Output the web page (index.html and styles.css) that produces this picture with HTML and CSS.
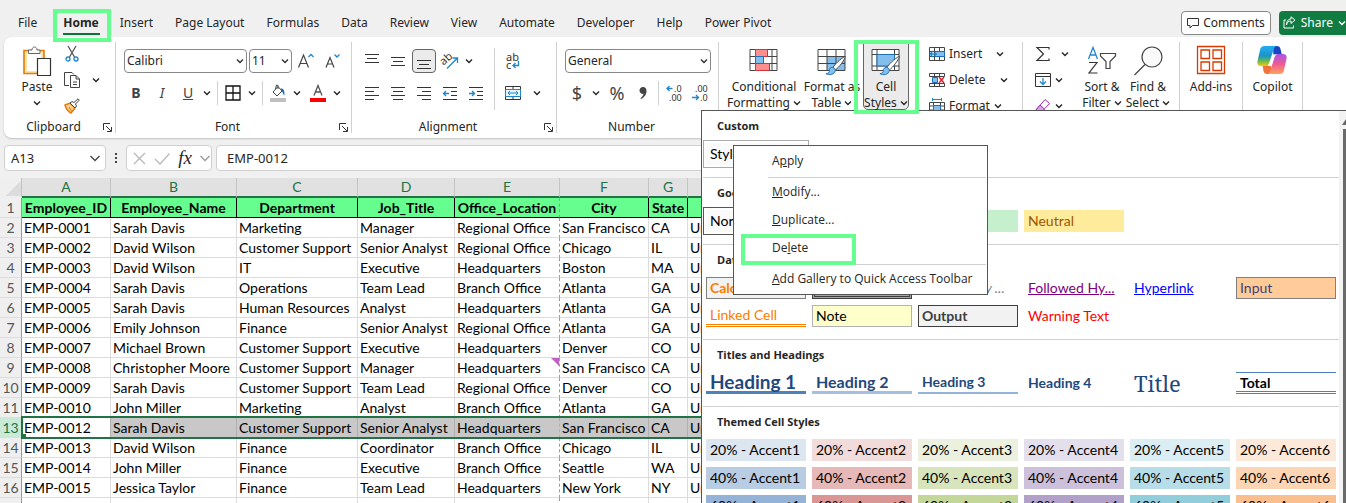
FILE: index.html
```html
<!DOCTYPE html>
<html lang="en">
<head>
    <meta charset="UTF-8">
    <meta name="viewport" content="width=device-width, initial-scale=1.0">
    <title>Employees - Excel</title>
    <link rel="stylesheet" href="styles.css">
</head>
<body>
    <svg class="defs" aria-hidden="true">
        <symbol id="chev" viewBox="0 0 8 8"><path d="M1 2.500 4 5.500 7 2.500" fill="none" stroke="currentColor" stroke-width="1.4"/></symbol>
        <symbol id="launch" viewBox="0 0 9 9"><path d="M.5 7V.5H7M3 3l5 5M8.500 4v4.500H4" fill="none" stroke="#333"/></symbol>
        <symbol id="brush" viewBox="0 0 24 22"><path d="M22 1.500C17 4 11 10 9.500 13l2.500 2.500C15.500 13 21 6 22.500 1.500z" fill="#fff" stroke="#444"/><path d="M9.500 13c-4-.5-4 3-4 4.500-.8 1.500-2 2-3.500 2 3 2 9.500 1.500 10-4z" fill="#83beec" stroke="#1e6fb8"/></symbol>
    </svg>

    <header class="tabs-bar">
        <nav class="tabs">
            <a href="#" class="tab">File</a>
            <a href="#" class="tab active">Home<span class="mark mark-home"></span></a>
            <a href="#" class="tab">Insert</a>
            <a href="#" class="tab">Page Layout</a>
            <a href="#" class="tab">Formulas</a>
            <a href="#" class="tab">Data</a>
            <a href="#" class="tab">Review</a>
            <a href="#" class="tab">View</a>
            <a href="#" class="tab">Automate</a>
            <a href="#" class="tab">Developer</a>
            <a href="#" class="tab">Help</a>
            <a href="#" class="tab">Power Pivot</a>
        </nav>
        <button class="comments"><svg width="12" height="12" viewBox="0 0 12 12"><path d="M.5 1.500h11v7H5.500L3 11V8.500H.5z" fill="none" stroke="#333"/></svg>Comments</button>
        <button class="share"><svg width="13" height="13" viewBox="0 0 13 13"><path d="M3 4H1v8h9.500V9.500M3.500 9C4 6 5.500 5 8 5V7.500L12 4 8 .8V3C5 3 3.500 5.500 3.500 9z" fill="none" stroke="#fff"/></svg>Share<svg class="chev"><use href="#chev"/></svg></button>
    </header>

    <section class="ribbon">
        <div class="group clipboard">
            <div class="content">
                <button class="big">
                    <svg width="28" height="32" viewBox="0 0 28 32"><path d="M1 5.500h20v23H1z" fill="#fbe3a4" stroke="#e07b0c" stroke-width="1.600"/><path d="M4 8h14v18H4z" fill="#fff"/><path d="M5.500 8.500V5h3.500C9 1 14 1 14 5h3v3.500z" fill="#fff" stroke="#666"/><path d="M14.500 13.500h13v17h-13z" fill="#fff" stroke="#333" stroke-width="1.200"/></svg>
                    <span>Paste</span><svg class="chev"><use href="#chev"/></svg>
                </button>
                <div class="stack">
                    <button class="tool" aria-label="Cut"><svg width="14" height="16" viewBox="0 0 14 16"><path d="M3 0l6.500 11M11 0L4.500 11" fill="none" stroke="#555" stroke-width="1.300"/><circle cx="3" cy="13" r="2" fill="none" stroke="#1e86cf" stroke-width="1.300"/><circle cx="11" cy="13" r="2" fill="none" stroke="#1e86cf" stroke-width="1.300"/></svg></button>
                    <div class="split"><button class="tool" aria-label="Copy"><svg width="16" height="16" viewBox="0 0 16 16"><path d="M5 13.500H.5V.5H8l2 2" fill="none" stroke="#444"/><path d="M6.500 3.500H12l3.500 3.500v8.500h-9zM12 3.500V7h3.500M9 10h4M9 12.500h4" fill="#fff" stroke="#444"/></svg></button><button class="drop spaced" aria-label="Copy options"><svg class="chev"><use href="#chev"/></svg></button></div>
                    <button class="tool" aria-label="Format Painter"><svg width="16" height="16" viewBox="0 0 16 16"><path d="M1 7l5-2 5 5-4 5c-2-1-5-4-6-8z" fill="#fbd08c" stroke="#e07b0c" stroke-width="1.400"/><path d="M5 9l3 5" stroke="#e07b0c"/><path d="M6 5l2-1.500 2 1L14 .8l1.300 1.300L11.500 6l1 2L11 10z" fill="#fff" stroke="#444"/></svg></button>
                </div>
            </div>
            <div class="caption">Clipboard<button class="launcher" aria-label="Clipboard settings"><svg><use href="#launch"/></svg></button></div>
        </div>

        <div class="group font">
            <div class="content rows">
                <div class="row">
                    <select class="box font-name" aria-label="Font"><option>Calibri</option></select>
                    <select class="box font-size" aria-label="Font size"><option>11</option></select>
                    <button class="tool" aria-label="Increase font size"><svg width="18" height="16" viewBox="0 0 18 16"><path d="M1.500 14.500L6.500 2l5 12.500M3 10.500h7" fill="none" stroke="#444" stroke-width="1.200"/><path d="M11.500 4L14 1.500 16.500 4" fill="none" stroke="#1e86cf" stroke-width="1.300"/></svg></button>
                    <button class="tool" aria-label="Decrease font size"><svg width="18" height="16" viewBox="0 0 18 16"><path d="M3 14.500L7 4.500l4 10M4.500 11h5" fill="none" stroke="#444" stroke-width="1.200"/><path d="M11.500 1.500L14 4 16.500 1.500" fill="none" stroke="#1e86cf" stroke-width="1.300"/></svg></button>
                </div>
                <div class="row">
                    <button class="tool letter"><b>B</b></button>
                    <button class="tool letter"><i>I</i></button>
                    <div class="split"><button class="tool letter"><u>U</u></button><button class="drop" aria-label="Underline options"><svg class="chev"><use href="#chev"/></svg></button></div>
                    <span class="line"></span>
                    <div class="split"><button class="tool" aria-label="Borders"><svg width="16" height="16" viewBox="0 0 16 16"><path d="M1 1h14v14H1zM8 1v14M1 8h14" fill="none" stroke="#111" stroke-width="1.300"/></svg></button><button class="drop" aria-label="Border options"><svg class="chev"><use href="#chev"/></svg></button></div>
                    <span class="line"></span>
                    <div class="split"><button class="tool" aria-label="Fill colour"><svg width="16" height="18" viewBox="0 0 16 18"><path d="M3 8l5-5.500L12 7l-5 5zM8 5V1.500L6.500 1 5.500 5" fill="none" stroke="#444"/><path d="M11 4.500c3 0 3.500 2 3.500 7-1.500-1-2-4-3.500-6" fill="#1e6fb8"/><path d="M0 14h16v4H0z" fill="#c0c0c0"/></svg></button><button class="drop" aria-label="Fill options"><svg class="chev"><use href="#chev"/></svg></button></div>
                    <div class="split"><button class="tool" aria-label="Font colour"><svg width="16" height="18" viewBox="0 0 16 18"><path d="M4 11.500L8 1.500l4 10M5.500 8h5" fill="none" stroke="#555" stroke-width="1.300"/><path d="M0 14h16v4H0z" fill="#f00"/></svg></button><button class="drop" aria-label="Font colour options"><svg class="chev"><use href="#chev"/></svg></button></div>
                </div>
            </div>
            <div class="caption">Font<button class="launcher" aria-label="Font settings"><svg><use href="#launch"/></svg></button></div>
        </div>

        <div class="group alignment">
            <div class="content">
                <div class="rows align-left">
                    <div class="row">
                        <button class="tool" aria-label="Top align"><svg width="14" height="16" viewBox="0 0 14 16"><path d="M0 1.500h14M2 5.500h10M0 9.500h14" stroke="#333"/></svg></button>
                        <button class="tool" aria-label="Middle align"><svg width="14" height="16" viewBox="0 0 14 16"><path d="M0 4.500h14M2 8.500h10M0 12.500h14" stroke="#333"/></svg></button>
                        <button class="tool pressed" aria-label="Bottom align"><svg width="14" height="16" viewBox="0 0 14 16"><path d="M0 7.500h14M2 11.500h10M0 15.500h14" stroke="#333"/></svg></button>
                        <div class="split"><button class="tool" aria-label="Orientation"><svg width="18" height="18" viewBox="0 0 18 18"><text x="0" y="11" font-size="11" fill="#333" transform="rotate(-42 5 9)">ab</text><path d="M6 16.500L16 6.500M11.500 6H16.500v5" fill="none" stroke="#1e86cf" stroke-width="1.300"/></svg></button><button class="drop" aria-label="Orientation options"><svg class="chev"><use href="#chev"/></svg></button></div>
                    </div>
                    <div class="row">
                        <button class="tool" aria-label="Align left"><svg width="14" height="16" viewBox="0 0 14 16"><path d="M0 2.500h14M0 6.500h9M0 10.500h14M0 14.500h9" stroke="#333"/></svg></button>
                        <button class="tool" aria-label="Center"><svg width="14" height="16" viewBox="0 0 14 16"><path d="M0 2.500h14M2 6.500h10M0 10.500h14M2 14.500h10" stroke="#333"/></svg></button>
                        <button class="tool" aria-label="Align right"><svg width="14" height="16" viewBox="0 0 14 16"><path d="M0 2.500h14M5 6.500h9M0 10.500h14M5 14.500h9" stroke="#333"/></svg></button>
                        <button class="tool" aria-label="Decrease indent"><svg width="14" height="16" viewBox="0 0 14 16"><path d="M0 2.500h14M8 6.500h6M8 10.500h6M0 14.500h14" stroke="#333"/><path d="M6 8.500H.7M3 6L.5 8.500 3 11" fill="none" stroke="#1e86cf" stroke-width="1.300"/></svg></button>
                        <button class="tool" aria-label="Increase indent"><svg width="14" height="16" viewBox="0 0 14 16"><path d="M0 2.500h14M8 6.500h6M8 10.500h6M0 14.500h14" stroke="#333"/><path d="M0 8.500h5.500M3 6l2.500 2.500L3 11" fill="none" stroke="#1e86cf" stroke-width="1.300"/></svg></button>
                    </div>
                </div>
                <span class="line tall"></span>
                <div class="rows">
                    <div class="row">
                        <button class="tool" aria-label="Wrap text"><svg width="16" height="18" viewBox="0 0 16 18"><text x="1" y="9" font-size="11" fill="#333">ab</text><text x="1" y="17" font-size="11" fill="#333">c</text><path d="M13.500 9v4.500H8M10.500 11L8 13.500l2.500 2.500" fill="none" stroke="#1e86cf" stroke-width="1.300"/></svg></button>
                    </div>
                    <div class="row split">
                        <button class="tool" aria-label="Merge and center"><svg width="16" height="16" viewBox="0 0 16 16"><path d="M.5 1.500h15v13H.5zM8 1.500V4M8 12v2.500" fill="#fff" stroke="#333"/><path d="M.5 4.500h15v7H.5z" fill="#eaf4fc" stroke="#1e86cf"/><path d="M3 8h10M5 6L3 8l2 2M11 6l2 2-2 2" fill="none" stroke="#1e86cf"/></svg></button><button class="drop spaced" aria-label="Merge options"><svg class="chev"><use href="#chev"/></svg></button>
                    </div>
                </div>
            </div>
            <div class="caption">Alignment<button class="launcher" aria-label="Alignment settings"><svg><use href="#launch"/></svg></button></div>
        </div>

        <div class="group number">
            <div class="content rows">
                <div class="row">
                    <select class="box number-format" aria-label="Number format"><option>General</option></select>
                </div>
                <div class="row">
                    <div class="split"><button class="tool symbol">$</button><button class="drop" aria-label="Currency options"><svg class="chev"><use href="#chev"/></svg></button></div>
                    <button class="tool symbol">%</button>
                    <button class="tool" aria-label="Comma style"><svg width="10" height="14" viewBox="0 0 10 14"><path d="M5 1c2.500 0 3.500 2 3.500 4 0 4-2.500 6.500-5.500 8l-.5-.8C4 11 5.300 9.500 5.500 7.800 3 8.300 1.500 6.500 1.500 4.500 1.500 2.500 3 1 5 1z" fill="#444"/></svg></button>
                    <span class="line"></span>
                    <button class="tool" aria-label="Increase decimal"><svg width="16" height="18" viewBox="0 0 16 18"><text x="8" y="8" font-size="9" fill="#333">.0</text><text x="3" y="17" font-size="9" fill="#333">.00</text><path d="M6.500 4.500H1M3.500 2L1 4.500 3.500 7" fill="none" stroke="#1e86cf" stroke-width="1.300"/></svg></button>
                    <button class="tool" aria-label="Decrease decimal"><svg width="16" height="18" viewBox="0 0 16 18"><text x="3" y="8" font-size="9" fill="#333">.00</text><text x="8" y="17" font-size="9" fill="#333">.0</text><path d="M0 13.500h6.500M4 11l2.500 2.500L4 16" fill="none" stroke="#1e86cf" stroke-width="1.300"/></svg></button>
                </div>
            </div>
            <div class="caption">Number</div>
        </div>

        <div class="group styles">
            <div class="content">
                <button class="big conditional">
                    <svg width="30" height="32" viewBox="0 0 30 32"><path d="M1 4.500h27v21H1zM1 11.500h27M1 18.500h27M6.500 4v21M23 4v21" fill="#fff" stroke="#444"/><path d="M6.500 4.500h12v7h-12zM6.500 18.500h14v7h-14z" fill="#ff8e8e" stroke="#d13438"/><path d="M6.500 11.500h8v7h-8z" fill="#83beec" stroke="#1e6fb8"/></svg>
                    <span>Conditional<br>Formatting <svg class="chev"><use href="#chev"/></svg></span>
                </button>
                <button class="big format-as">
                    <svg width="30" height="32" viewBox="0 0 30 32"><path d="M1 4.500h27v21H1z" fill="#fff"/><path d="M10 11.500h18v14H10z" fill="#83beec"/><path d="M1 4.500h27v21H1zM1 11.500h27M1 18.500h27M10 4v21M19 4v21" fill="none" stroke="#444"/><use href="#brush" x="7" y="10" width="23" height="21"/></svg>
                    <span>Format as<br>Table <svg class="chev"><use href="#chev"/></svg></span>
                </button>
                <button class="big cell-styles">
                    <svg width="30" height="32" viewBox="0 0 30 32"><path d="M1 4.500h27v21H1zM1 9.500h27M1 21h27M6 4v21M23.500 4v21" fill="#fff" stroke="#444"/><path d="M6 9.500h17.500V21H6z" fill="#83beec" stroke="#1e6fb8"/><use href="#brush" x="7" y="10" width="23" height="21"/></svg>
                    <span>Cell<br>Styles <svg class="chev"><use href="#chev"/></svg></span>
                    <span class="mark mark-styles"></span>
                </button>
                <div class="stack cells">
                    <button class="wide"><svg width="16" height="16" viewBox="0 0 16 16"><path d="M.5 1.500h15v13H.5zM5.500 1.500v13M10.500 1.500v13M.5 5.500h15M.5 10.500h15" fill="#fff" stroke="#444"/><path d="M6 5.500h9.500v5H6z" fill="#83beec" stroke="#1e6fb8"/><path d="M8 8H1M4 5L1 8l3 3" fill="none" stroke="#1e86cf" stroke-width="1.300"/></svg>Insert<svg class="chev"><use href="#chev"/></svg></button>
                    <button class="wide"><svg width="16" height="16" viewBox="0 0 16 16"><path d="M.5 1.500h15M.5 14.500h15M.5 1.500v3h15v-3M.5 14.500v-3h15v3M5.500 1.500v3M10.500 1.500v3M5.500 11.500v3M10.500 11.500v3" fill="none" stroke="#444"/><path d="M3.500 5.500h5v5h-5z" fill="#83beec" stroke="#1e6fb8"/><path d="M10 5l5 6M15 5l-5 6" stroke="#e81123" stroke-width="1.300"/></svg>Delete<svg class="chev"><use href="#chev"/></svg></button>
                    <button class="wide"><svg width="16" height="16" viewBox="0 0 16 16"><path d="M.5 4.500h15v11H.5zM4.500 4.500v11M11.500 4.500v11M.5 8h15M.5 12h15" fill="#fff" stroke="#444"/><path d="M4.500 7.500h7v5h-7z" fill="#83beec" stroke="#1e6fb8"/><path d="M3.500 0v3M12.500 0v3M3.500 1.500h9" stroke="#1e86cf"/></svg>Format<svg class="chev"><use href="#chev"/></svg></button>
                </div>
            </div>
        </div>

        <div class="group editing">
            <div class="content">
                <div class="stack">
                    <button class="wide sum" aria-label="AutoSum"><svg width="16" height="16" viewBox="0 0 16 16"><path d="M14 3.500V1.500H2L8.500 8 2 14.500h12v-2" fill="none" stroke="#333" stroke-width="1.200"/></svg><svg class="chev"><use href="#chev"/></svg></button>
                    <button class="wide" aria-label="Fill"><svg width="16" height="16" viewBox="0 0 16 16"><path d="M.5 1.500h15v13H.5zM.5 4.500h15" fill="none" stroke="#333"/><path d="M8 6v6.500M5 9.500l3 3 3-3" fill="none" stroke="#1e86cf" stroke-width="1.300"/></svg><svg class="chev"><use href="#chev"/></svg></button>
                    <button class="wide" aria-label="Clear"><svg width="16" height="16" viewBox="0 0 16 16"><path d="M10 1.500l4.500 4L6 14.500H3.500L1 12z" fill="#fff" stroke="#9b2fae"/><path d="M5 7l4.500 4L6 14.500H3.500L1 12z" fill="#d9a1e2" stroke="#9b2fae"/></svg><svg class="chev"><use href="#chev"/></svg></button>
                </div>
                <button class="big sort">
                    <svg width="30" height="32" viewBox="0 0 30 32"><path d="M1.500 14L6 2.500 10.500 14M3 10h6" fill="none" stroke="#1e86cf" stroke-width="1.300"/><path d="M2 17.500h8L2 28h8.500" fill="none" stroke="#333" stroke-width="1.200"/><path d="M13.500 8.500h15v2.500L23 16.500v7h-4v-7L13.500 11z" fill="#fff" stroke="#444" stroke-width="1.200"/></svg>
                    <span>Sort &amp;<br>Filter <svg class="chev"><use href="#chev"/></svg></span>
                </button>
                <button class="big find">
                    <svg width="30" height="32" viewBox="0 0 30 32"><circle cx="19" cy="12" r="10" fill="#fafafa" stroke="#444" stroke-width="1.200"/><path d="M12 19.500L1.500 30" stroke="#444" stroke-width="1.300"/></svg>
                    <span>Find &amp;<br>Select <svg class="chev"><use href="#chev"/></svg></span>
                </button>
            </div>
        </div>

        <div class="group addins">
            <div class="content">
                <button class="big">
                    <svg width="30" height="32" viewBox="0 0 30 32"><path d="M1.500 1.500h27v27h-27zM5 5h8.500v8.500H5zM17 5h8.500v8.500H17zM5 17h8.500v8.500H5zM17 17h8.500v8.500H17z" fill="none" stroke="#d83b01" stroke-width="1.300"/></svg>
                    <span>Add-ins</span>
                </button>
            </div>
        </div>

        <div class="group copilot">
            <div class="content">
                <button class="big">
                    <svg width="32" height="32" viewBox="0 0 32 32">
                        <defs>
                            <linearGradient id="g1" x1="0" y1="0" x2="0" y2="1"><stop offset="0" stop-color="#22aef5"/><stop offset=".5" stop-color="#1c93c8"/><stop offset=".75" stop-color="#6bbb4c"/><stop offset="1" stop-color="#f2c811"/></linearGradient>
                            <linearGradient id="g2" x1="0" y1="0" x2="0" y2="1"><stop offset="0" stop-color="#a855e8"/><stop offset=".5" stop-color="#ee5a93"/><stop offset="1" stop-color="#fda35a"/></linearGradient>
                        </defs>
                        <path d="M17 1h4c2 0 3 1 3.500 3l1.200 5H21c-2 0-3 1-3.500 3z" fill="#1747c4"/>
                        <path d="M15 29h-4c-2 0-3-1-3.500-3L6.500 20h5c2 0 3-1 3.500-3z" fill="#f0743a"/>
                        <path d="M8.500 1H21c-2 0-3 2-3.500 4l-4 12c-1 3-2 4-4 4H5c-3 0-4-2-3.500-5L4 5c.7-3 2-4 4.500-4z" fill="url(#g1)"/>
                        <path d="M23.500 29H11c2 0 3-2 3.500-4l4-13c1-3 2-3 4-3H27c3 0 4 2 3.500 5L28 25c-.7 3-2 4-4.500 4z" fill="url(#g2)"/>
                        <path d="M16.500 9.500h4.200c-1.200.5-2 1.500-2.500 3l-2.800 8.500h-4c1.200-.8 1.900-2 2.400-3.500z" fill="#fff"/>
                    </svg>
                    <span>Copilot</span>
                </button>
            </div>
        </div>
    </section>

    <section class="formula-bar">
        <div class="name-box"><input type="text" value="A13" aria-label="Name box"><svg width="10" height="8" viewBox="0 0 10 8"><path d="M.5 2L5 6.500 9.500 2" fill="none" stroke="#444" stroke-width="1.300"/></svg></div>
        <svg width="4" height="12" viewBox="0 0 4 12"><path d="M1 1h2v2H1zM1 5h2v2H1zM1 9h2v2H1z" fill="#444"/></svg>
        <div class="fx-box">
            <button aria-label="Cancel"><svg width="13" height="13" viewBox="0 0 13 13"><path d="M1 1l11 11M12 1L1 12" stroke="#b8b8b8" stroke-width="1.300"/></svg></button>
            <button aria-label="Enter"><svg width="16" height="13" viewBox="0 0 16 13"><path d="M1 7l5 5L15.500 1.500" fill="none" stroke="#b8b8b8" stroke-width="1.300"/></svg></button>
            <button class="fx">fx</button>
            <button aria-label="Functions"><svg width="10" height="8" viewBox="0 0 10 8"><path d="M.5 2L5 6.500 9.500 2" fill="none" stroke="#999" stroke-width="1.300"/></svg></button>
        </div>
        <input type="text" class="formula" value="EMP-0012" aria-label="Formula">
    </section>

    <table class="sheet">
        <colgroup><col class="c-num"><col class="c-a"><col class="c-b"><col class="c-c"><col class="c-d"><col class="c-e"><col class="c-f"><col class="c-g"><col></colgroup>
        <thead>
            <tr><th class="corner"></th><th>A</th><th>B</th><th>C</th><th>D</th><th>E</th><th>F</th><th>G</th><th></th></tr>
        </thead>
        <tbody>
            <tr class="titles"><th>1</th><td>Employee_ID</td><td>Employee_Name</td><td>Department</td><td>Job_Title</td><td>Office_Location</td><td>City</td><td>State</td><td></td></tr>
            <tr><th>2</th><td>EMP-0001</td><td>Sarah Davis</td><td>Marketing</td><td>Manager</td><td>Regional Office</td><td>San Francisco</td><td>CA</td><td>United States</td></tr>
            <tr><th>3</th><td>EMP-0002</td><td>David Wilson</td><td>Customer Support</td><td>Senior Analyst</td><td>Regional Office</td><td>Chicago</td><td>IL</td><td>United States</td></tr>
            <tr><th>4</th><td>EMP-0003</td><td>David Wilson</td><td>IT</td><td>Executive</td><td>Headquarters</td><td>Boston</td><td>MA</td><td>United States</td></tr>
            <tr><th>5</th><td>EMP-0004</td><td>Sarah Davis</td><td>Operations</td><td>Team Lead</td><td>Branch Office</td><td>Atlanta</td><td>GA</td><td>United States</td></tr>
            <tr><th>6</th><td>EMP-0005</td><td>Sarah Davis</td><td>Human Resources</td><td>Analyst</td><td>Headquarters</td><td>Atlanta</td><td>GA</td><td>United States</td></tr>
            <tr><th>7</th><td>EMP-0006</td><td>Emily Johnson</td><td>Finance</td><td>Senior Analyst</td><td>Regional Office</td><td>Atlanta</td><td>GA</td><td>United States</td></tr>
            <tr><th>8</th><td>EMP-0007</td><td>Michael Brown</td><td>Customer Support</td><td>Executive</td><td>Headquarters</td><td>Denver</td><td>CO</td><td>United States</td></tr>
            <tr><th>9</th><td>EMP-0008</td><td>Christopher Moore</td><td>Customer Support</td><td>Manager</td><td class="noted">Headquarters</td><td>San Francisco</td><td>CA</td><td>United States</td></tr>
            <tr><th>10</th><td>EMP-0009</td><td>Sarah Davis</td><td>Customer Support</td><td>Team Lead</td><td>Regional Office</td><td>Denver</td><td>CO</td><td>United States</td></tr>
            <tr><th>11</th><td>EMP-0010</td><td>John Miller</td><td>Marketing</td><td>Analyst</td><td>Branch Office</td><td>Atlanta</td><td>GA</td><td>United States</td></tr>
            <tr class="selected"><th>13</th><td>EMP-0012</td><td>Sarah Davis</td><td>Customer Support</td><td>Senior Analyst</td><td>Headquarters</td><td>San Francisco</td><td>CA</td><td>United States</td></tr>
            <tr><th>14</th><td>EMP-0013</td><td>David Wilson</td><td>Finance</td><td>Coordinator</td><td>Branch Office</td><td>Chicago</td><td>IL</td><td>United States</td></tr>
            <tr><th>15</th><td>EMP-0014</td><td>John Miller</td><td>Finance</td><td>Executive</td><td>Branch Office</td><td>Seattle</td><td>WA</td><td>United States</td></tr>
            <tr><th>16</th><td>EMP-0015</td><td>Jessica Taylor</td><td>Finance</td><td>Team Lead</td><td>Headquarters</td><td>New York</td><td>NY</td><td>United States</td></tr>
            <tr><th></th><td></td><td></td><td></td><td></td><td></td><td></td><td></td><td></td></tr>
        </tbody>
    </table>

    <!-- Cell Styles gallery -->
    <aside class="gallery">
        <div class="gallery-list">
            <section>
                <h2>Custom</h2>
                <div class="swatches"><button class="current soft">Style 1</button></div>
            </section>
            <section>
                <h2>Good, Bad and Neutral</h2>
                <div class="swatches">
                    <button class="current">Normal</button><button class="bad">Bad</button><button class="good">Good</button><button class="neutral">Neutral</button>
                </div>
            </section>
            <section>
                <h2>Data and Model</h2>
                <div class="swatches">
                    <button class="calculation">Calculation</button><button class="check">Check Cell</button><button class="explain">Explanatory ...</button><button class="followed">Followed Hy...</button><button class="hyper">Hyperlink</button><button class="input-cell">Input</button>
                    <button class="linked">Linked Cell</button><button class="note">Note</button><button class="output">Output</button><button class="warning">Warning Text</button>
                </div>
            </section>
            <section>
                <h2>Titles and Headings</h2>
                <div class="swatches">
                    <button class="h-1">Heading 1</button><button class="h-2">Heading 2</button><button class="h-3">Heading 3</button><button class="h-4">Heading 4</button><button class="title">Title</button><button class="total">Total</button>
                </div>
            </section>
            <section>
                <h2>Themed Cell Styles</h2>
                <div class="swatches">
                    <button class="a1-20">20% - Accent1</button><button class="a2-20">20% - Accent2</button><button class="a3-20">20% - Accent3</button><button class="a4-20">20% - Accent4</button><button class="a5-20">20% - Accent5</button><button class="a6-20">20% - Accent6</button>
                    <button class="a1-40">40% - Accent1</button><button class="a2-40">40% - Accent2</button><button class="a3-40">40% - Accent3</button><button class="a4-40">40% - Accent4</button><button class="a5-40">40% - Accent5</button><button class="a6-40">40% - Accent6</button>
                    <button class="a1-60">60% - Accent1</button><button class="a2-60">60% - Accent2</button><button class="a3-60">60% - Accent3</button><button class="a4-60">60% - Accent4</button><button class="a5-60">60% - Accent5</button><button class="a6-60">60% - Accent6</button>
                </div>
            </section>
        </div>
        <div class="scrollbar"><svg width="7" height="6" viewBox="0 0 7 6"><path d="M3 6l4-6v6z" fill="#666"/></svg><span class="thumb"></span></div>
    </aside>

    <menu class="context-menu">
        <li><button>A<u>p</u>ply</button></li>
        <li class="divided"><button><u>M</u>odify...</button></li>
        <li><button><u>D</u>uplicate...</button></li>
        <li><button>De<u>l</u>ete</button><span class="mark mark-delete"></span></li>
        <li class="divided"><button><u>A</u>dd Gallery to Quick Access Toolbar</button></li>
    </menu>
</body>
</html>
```
FILE: styles.css
```css
*, *::before, *::after {
    box-sizing: border-box;
    margin: 0;
    padding: 0;
}
body {
    position: relative;
    height: 100vh;
    overflow: hidden;
    background: #f0f0f0;
    color: #262626;
    font-family: "Noto Sans", "Open Sans", sans-serif;
    font-size: 12px;
    line-height: 16px;
}
button, input, select {
    font: inherit;
    color: inherit;
    border: none;
    background: none;
}
svg {
    display: block;
    flex: none;
    overflow: visible;
}
.defs {
    display: none;
}
.chev {
    width: 8px;
    height: 8px;
}

/* Green callout frames */
.mark {
    position: absolute;
    border: 4px solid #66ff8f;
    z-index: 30;
}

/* Tabs */
.tabs-bar {
    display: flex;
    align-items: center;
    height: 37px;
    padding: 8px 0 0 7px;
}
.tabs {
    display: flex;
    margin-right: auto;
}
.tab {
    position: relative;
    padding: 2px 11px;
    color: inherit;
    text-decoration: none;
    white-space: nowrap;
}
.tab.active {
    margin: 0 -1px 0 4px;
    font-weight: 700;
}
.tab.active::after {
    content: "";
    position: absolute;
    left: 11px;
    right: 10px;
    bottom: -2px;
    height: 2px;
    background: #0f703b;
}
.mark-home {
    inset: -4px -1px -9px 1px;
}
.comments, .share {
    display: flex;
    align-items: center;
    height: 24px;
    border-radius: 4px;
}
.comments {
    gap: 4px;
    padding: 0 5px;
    margin-right: 8px;
    border: 1px solid #888;
    background: #fff;
}
.share {
    gap: 5px;
    padding-left: 4px;
    border-radius: 4px 0 0 4px;
    background: #107c41;
    color: #fff;
}

/* Ribbon */
.ribbon {
    display: flex;
    height: 101px;
    margin-left: 4px;
    padding: 5px 0;
    background: #fff;
    border-radius: 8px 0 0 8px;
    box-shadow: 0 1px 2px rgba(0,0,0,0.2);
}
.group {
    display: flex;
    flex-direction: column;
    flex: none;
    border-right: 1px solid #d1d1d1;
    padding-left: 8px;
}
.content {
    display: flex;
    flex: none;
    height: 77px;
}
.caption {
    position: relative;
    text-align: center;
    margin-left: -8px;
    padding-right: 12px;
}
.launcher {
    position: absolute;
    right: 3px;
    top: 4px;
}
.launcher svg {
    width: 9px;
    height: 9px;
}
.rows {
    display: flex;
    flex-direction: column;
    gap: 8px;
    padding-top: 7px;
}
.row {
    display: flex;
    align-items: center;
    height: 24px;
    gap: 2px;
}
.split {
    display: flex;
    gap: 0;
}
.tool {
    display: flex;
    align-items: center;
    justify-content: center;
    width: 24px;
    height: 24px;
}
.drop {
    display: flex;
    align-items: center;
    justify-content: center;
    width: 14px;
    height: 24px;
}
.drop.spaced {
    margin-left: 5px;
}
.pressed {
    border: 1px solid #666;
    border-radius: 4px;
    background: #ebebeb;
}
.letter {
    font-size: 14px;
    color: #444;
}
.symbol {
    font-size: 18px;
    color: #444;
}
.line {
    width: 1px;
    height: 24px;
    margin: 0 1px;
    background: #d1d1d1;
}
.line.tall {
    height: 62px;
    margin: 6px 6px 0 0;
}
.box {
    height: 24px;
    padding-left: 2px;
    border: 1px solid #888;
    border-radius: 4px;
    appearance: none;
    background: #fff url("data:image/svg+xml,%3Csvg xmlns='http://www.w3.org/2000/svg' width='8' height='8'%3E%3Cpath d='M1 2.500 4 5.500 7 2.500' fill='none' stroke='%23333' stroke-width='1.400'/%3E%3C/svg%3E") no-repeat right 2px center;
}
.font-name {
    width: 123px;
}
.font-size {
    width: 43px;
}
.number-format {
    width: 146px;
}
.big {
    position: relative;
    display: flex;
    flex-direction: column;
    align-items: center;
    padding-top: 3px;
    white-space: nowrap;
}
.big > span:not(.mark) {
    margin-top: 2px;
}
.big .chev {
    display: inline-block;
}
.big > .chev {
    margin-top: 4px;
}
.stack {
    display: flex;
    flex-direction: column;
    gap: 2px;
}
.clipboard {
    width: 112px;
}
.clipboard .big {
    width: 50px;
}
.clipboard .stack {
    margin-left: -2px;
}
.font {
    width: 236px;
}
.alignment {
    width: 205px;
}
.align-left {
    width: 134px;
}
.number {
    width: 162px;
}
.styles {
    width: 304px;
}
.conditional {
    width: 74px;
}
.format-as {
    width: 62px;
}
.cell-styles {
    width: 46px;
    height: 68px;
    border: 1px solid #666;
    border-radius: 0 0 5px 5px;
    background: #ebebeb;
    padding-top: 2px;
}
.mark-styles {
    inset: -3px -11px -5px -10px;
}
.cells {
    margin-left: 20px;
}
.wide {
    display: flex;
    align-items: center;
    gap: 4px;
    height: 24px;
}
.cells .wide .chev {
    margin-left: 10px;
}
.cells .wide:last-child .chev {
    margin-left: 0;
}
.editing {
    width: 157px;
    padding-left: 12px;
}
.editing .stack {
    width: 44px;
}
.sum .chev {
    margin-left: 6px;
}
.sort {
    width: 46px;
}
.find {
    width: 46px;
}
.addins {
    width: 63px;
    padding: 0;
}
.copilot {
    width: 60px;
    padding: 0;
}
.addins .content, .copilot .content {
    justify-content: center;
}

/* Formula bar */
.formula-bar {
    display: flex;
    align-items: center;
    padding: 7px 0 7px 4px;
    font-size: 13px;
}
.name-box, .fx-box, .formula {
    height: 26px;
    border: 1px solid #d0d0d0;
    border-radius: 4px;
    background: #fff;
}
.name-box {
    display: flex;
    align-items: center;
    width: 102px;
    padding: 0 5px 0 6px;
    margin-right: 8px;
}
.name-box input {
    flex: 1;
    min-width: 0;
}
.fx-box {
    display: flex;
    align-items: center;
    justify-content: space-between;
    width: 86px;
    margin: 0 4px 0 8px;
    padding: 0 1px 0 6px;
}
.fx {
    font-family: "Liberation Serif", serif;
    font-style: italic;
    font-size: 19px;
}
.formula {
    flex: 1;
    border-radius: 4px 0 0 4px;
    padding-left: 10px;
}

/* Sheet */
.sheet {
    width: 100%;
    table-layout: fixed;
    border-collapse: separate;
    border-spacing: 0;
    font-family: Lato, sans-serif;
    font-size: 14px;
    line-height: 19px;
    color: #000;
}
.c-num { width: 22px; }
.c-a { width: 89px; }
.c-b { width: 126px; }
.c-c { width: 121px; }
.c-d { width: 97px; }
.c-e { width: 105px; }
.c-f { width: 89px; }
.c-g { width: 39px; }
.sheet th {
    height: 20px;
    border-right: 1px solid #999;
    border-bottom: 1px solid #ddd;
    background: #efefef;
    color: #555;
    font-weight: normal;
}
.sheet thead th {
    height: 20px;
    line-height: 18px;
    border-right-color: #c4c4c4;
    border-bottom: 2px solid #217346;
    background: #e1e1e1;
    color: #217346;
}
.sheet thead .corner {
    border-bottom: 2px solid #efefef;
    background: linear-gradient(135deg, #efefef 60%, #dcdcdc 60%);
}
.sheet td {
    position: relative;
    height: 20px;
    padding-left: 2px;
    border-right: 1px solid #dcdcdc;
    border-bottom: 1px solid #dcdcdc;
    background: #fff;
    white-space: nowrap;
    overflow: hidden;
}
.sheet td:nth-child(6) {
    border-right: 1px dashed #999;
}
.sheet .titles td {
    padding: 0;
    background: #66ff8f;
    border-color: #000;
    font-weight: bold;
    text-align: center;
}
.sheet .titles td:nth-child(6) {
    border-right-color: #999;
}
.noted::after {
    content: "";
    position: absolute;
    right: 0;
    top: 0;
    border: 4px solid #bd63c5;
    border-bottom-color: transparent;
    border-left-color: transparent;
}
.selected {
    position: relative;
    z-index: 2;
}
.selected::after {
    content: "";
    position: absolute;
    left: 21px;
    right: 0;
    top: -2px;
    height: 23px;
    border: 2px solid #217346;
    z-index: 3;
}
/* Fill handle */
.sheet .selected td:nth-child(2)::after {
    content: "";
    position: absolute;
    left: 0;
    bottom: 0;
    width: 4px;
    height: 3px;
    background: #217346;
}
.sheet .selected th {
    background: #caead8;
    color: #217346;
}
.sheet .selected td {
    background: #c8c8c8;
    border-right-color: #b0b0b0;
}
.sheet .selected td:nth-child(2) {
    background: #fff;
}

/* Gallery */
.gallery {
    position: absolute;
    left: 701px;
    right: 0;
    top: 110px;
    bottom: 0;
    display: flex;
    overflow: hidden;
    border: solid #555;
    border-width: 1px 0 0 1px;
    background: #fff;
    z-index: 10;
}
.gallery-list {
    flex: 1;
    padding-left: 1px;
}
.gallery section {
    padding: 7px 0 12px 3px;
    border-bottom: 1px solid #d0d0d0;
}
.gallery h2 {
    padding-left: 11px;
    margin-bottom: 9px;
    font-family: "Open Sans", sans-serif;
    font-size: 11px;
    line-height: 16px;
    font-weight: 700;
}
.swatches {
    display: grid;
    grid-template-columns: repeat(6, 100px);
    gap: 6px;
}
.swatches button {
    height: 22px;
    padding: 0 4px;
    font-family: Lato, sans-serif;
    font-size: 14px;
    line-height: 20px;
    text-align: left;
    color: #000;
    white-space: nowrap;
}
.swatches .current {
    outline: 1px solid #555;
    outline-offset: 2px;
    background: #fafafa;
}
.swatches .soft { outline-color: #aaa; }
.swatches .bad { background: #ffc7ce; color: #9c0006; }
.swatches .good { background: #c6efce; color: #006100; }
.swatches .neutral { background: #ffeb9c; color: #9c5700; }
.swatches .calculation { border: 1px solid #7f7f7f; padding: 0 3px; background: #f2f2f2; color: #fa7d00; font-weight: bold; }
.swatches .check { border: 3px double #3f3f3f; background: #a5a5a5; color: #fff; font-weight: bold; }
.swatches .explain { color: #7f7f7f; font-style: italic; }
.swatches .followed { color: #800080; text-decoration: underline; }
.swatches .hyper { color: #0000ff; text-decoration: underline; }
.swatches .input-cell { border: 1px solid #7f7f7f; padding: 0 3px; background: #ffcc99; color: #3f3f76; }
.swatches .linked { border-bottom: 3px double #ff8001; color: #fa7d00; }
.swatches .note { border: 1px solid #b2b2b2; padding: 0 3px; background: #ffffcc; }
.swatches .output { border: 1px solid #3f3f3f; padding: 0 3px; background: #f2f2f2; color: #3f3f3f; font-weight: bold; }
.swatches .warning { color: #ff0000; }
.swatches .h-1, .swatches .h-2, .swatches .h-3, .swatches .h-4 { color: #1f497d; font-weight: bold; }
.swatches .h-1 { border-bottom: 3px solid #4f81bd; font-size: 19px; line-height: 18px; }
.swatches .h-2 { border-bottom: 3px solid #a7bfde; font-size: 16px; line-height: 18px; }
.swatches .h-3 { border-bottom: 2px solid #95b3d7; }
.swatches .title { color: #1f497d; font-family: "Noto Serif", "DejaVu Serif", serif; font-size: 22px; line-height: 14px; }
.swatches .total { border-top: 1px solid #4f81bd; border-bottom: 3px double #4f81bd; font-weight: bold; }
.swatches .a1-20 { background: #dce6f1; }
.swatches .a2-20 { background: #f2dcdb; }
.swatches .a3-20 { background: #ebf1de; }
.swatches .a4-20 { background: #e4dfec; }
.swatches .a5-20 { background: #daeef3; }
.swatches .a6-20 { background: #fde9d9; }
.swatches .a1-40 { background: #b8cce4; }
.swatches .a2-40 { background: #e6b8b7; }
.swatches .a3-40 { background: #d8e4bc; }
.swatches .a4-40 { background: #ccc0da; }
.swatches .a5-40 { background: #b7dee8; }
.swatches .a6-40 { background: #fcd5b4; }
.swatches .a1-60 { background: #95b3d7; }
.swatches .a2-60 { background: #da9694; }
.swatches .a3-60 { background: #c4d79b; }
.swatches .a4-60 { background: #b1a0c7; }
.swatches .a5-60 { background: #92cddc; }
.swatches .a6-60 { background: #fabf8f; }
.scrollbar {
    display: flex;
    flex-direction: column;
    align-items: flex-end;
    gap: 4px;
    width: 7px;
    padding-top: 8px;
    background: #f3f3f3;
}
.thumb {
    flex: 1;
    width: 3px;
    background: #6a6a6a;
}

/* Right-click menu */
.context-menu {
    position: absolute;
    left: 733px;
    top: 145px;
    width: 255px;
    padding: 1px;
    border: 1px solid #555;
    background: #fff;
    list-style: none;
    font-family: "Open Sans", sans-serif;
    z-index: 20;
}
.context-menu li {
    position: relative;
}
.context-menu button {
    width: 100%;
    height: 28px;
    padding-left: 37px;
    text-align: left;
    white-space: nowrap;
}
.context-menu .divided {
    padding-top: 2px;
}
.context-menu .divided::before {
    content: "";
    display: block;
    height: 1px;
    margin-left: 33px;
    background: #d0d0d0;
}
.mark-delete {
    inset: 0 130px -3px 6px;
}
```
